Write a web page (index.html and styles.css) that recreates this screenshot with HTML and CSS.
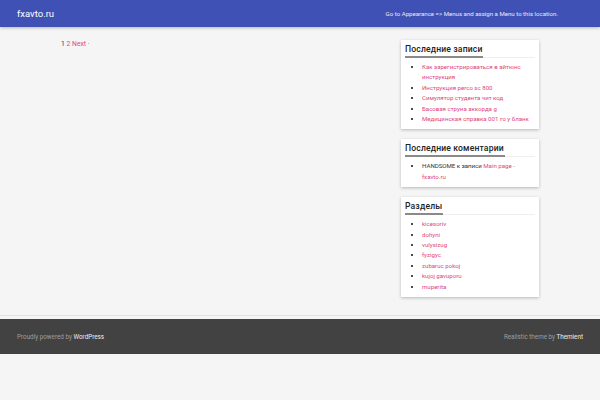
FILE: index.html
```html
<!DOCTYPE html>
<html lang="ru">
<head>
    <meta charset="UTF-8">
    <meta name="viewport" content="width=device-width, initial-scale=1.0">
    <title>fxavto.ru</title>
    <link rel="stylesheet" href="styles.css">
</head>
<body>
    <header class="site-header">
        <a href="#" class="site-title">fxavto.ru</a>
        <div class="menu-notice">Go to Appearance =&gt; Menus and assign a Menu to this location.</div>
    </header>

    <div class="page-wrap">
        <div class="site-content">
            <main class="content-area">
                <div class="pagination">
                    <span class="current">1</span>
                    <a href="#">2</a>
                    <a href="#">Next ·</a>
                </div>
            </main>

            <aside class="sidebar">
                <!-- Последние записи -->
                <section class="widget">
                    <h3 class="widget-title"><span>Последние записи</span></h3>
                    <ul>
                        <li><a href="#">Как зарегистрироваться в айтюнс инструкция</a></li>
                        <li><a href="#">Инструкция perco sc 800</a></li>
                        <li><a href="#">Симулятор студента чит код</a></li>
                        <li><a href="#">Басовая струна аккорда g</a></li>
                        <li><a href="#">Медицинская справка 001 го у бланк</a></li>
                    </ul>
                </section>

                <!-- Комментарии -->
                <section class="widget">
                    <h3 class="widget-title"><span>Последние коментарии</span></h3>
                    <ul>
                        <li>HANDSOME к записи <a href="#">Main page - fxavto.ru</a></li>
                    </ul>
                </section>

                <!-- Разделы -->
                <section class="widget">
                    <h3 class="widget-title"><span>Разделы</span></h3>
                    <ul>
                        <li><a href="#">kicesoriv</a></li>
                        <li><a href="#">dohyni</a></li>
                        <li><a href="#">vulysizug</a></li>
                        <li><a href="#">fyzigyc</a></li>
                        <li><a href="#">zubaruc pokoj</a></li>
                        <li><a href="#">kujoj gavuporu</a></li>
                        <li><a href="#">muperita</a></li>
                    </ul>
                </section>
            </aside>
        </div>
    </div>

    <footer class="site-footer">
        <div class="credits">Proudly powered by <a href="#">WordPress</a></div>
        <div class="credits">Realistic theme by <a href="#">Themient</a></div>
    </footer>
</body>
</html>
```
FILE: styles.css
```css
* {
    margin: 0;
    padding: 0;
    box-sizing: border-box;
}

body {
    background-color: #f5f5f5;
    font-family: 'Roboto', 'Liberation Sans', sans-serif;
    color: #333;
}

a {
    color: #e0457b;
    text-decoration: none;
}

.site-header {
    height: 27px;
    background-color: #3f51b5;
    box-shadow: 0 1px 3px rgba(0, 0, 0, 0.25);
    display: flex;
    justify-content: space-between;
    align-items: center;
    padding: 0 42px 0 17px;
}

.site-title {
    color: white;
    font-size: 9.5px;
}

.menu-notice {
    color: #e8eaf6;
    font-size: 6.1px;
}

.page-wrap {
    border-bottom: 1px solid #e4e4e4;
    padding-bottom: 8px;
}

.site-content {
    width: 478px;
    margin: 13px auto 0;
    display: flex;
    justify-content: space-between;
}

.pagination {
    font-size: 6.8px;
    line-height: 8px;
}

.pagination .current {
    color: #333;
}

.sidebar {
    width: 138px;
}

.widget {
    background-color: white;
    box-shadow: 0 1px 3px rgba(0, 0, 0, 0.25);
    padding: 3px 4px 5px;
    margin-bottom: 10px;
}

.widget-title {
    font-size: 8.6px;
    font-weight: 500;
    line-height: 12px;
    color: #222;
    border-bottom: 1px solid #eee;
    letter-spacing: 0.15px;
}

.widget-title span {
    display: inline-block;
    padding-bottom: 1px;
    border-bottom: 2px solid #8a8a8a;
    margin-bottom: -1px;
    padding-right: 1px;
}

.widget ul {
    margin-top: 4px;
    padding-left: 17px;
    padding-right: 4px;
    font-size: 6.1px;
    line-height: 10.4px;
    color: #333;
}

.widget li::marker {
    color: #111;
}

.site-footer {
    margin-top: 3px;
    height: 35px;
    background-color: #424242;
    display: flex;
    justify-content: space-between;
    align-items: center;
    padding: 0 17px;
}

.credits {
    font-size: 6.3px;
    color: #9e9e9e;
}

.credits a {
    color: #eeeeee;
}
```
